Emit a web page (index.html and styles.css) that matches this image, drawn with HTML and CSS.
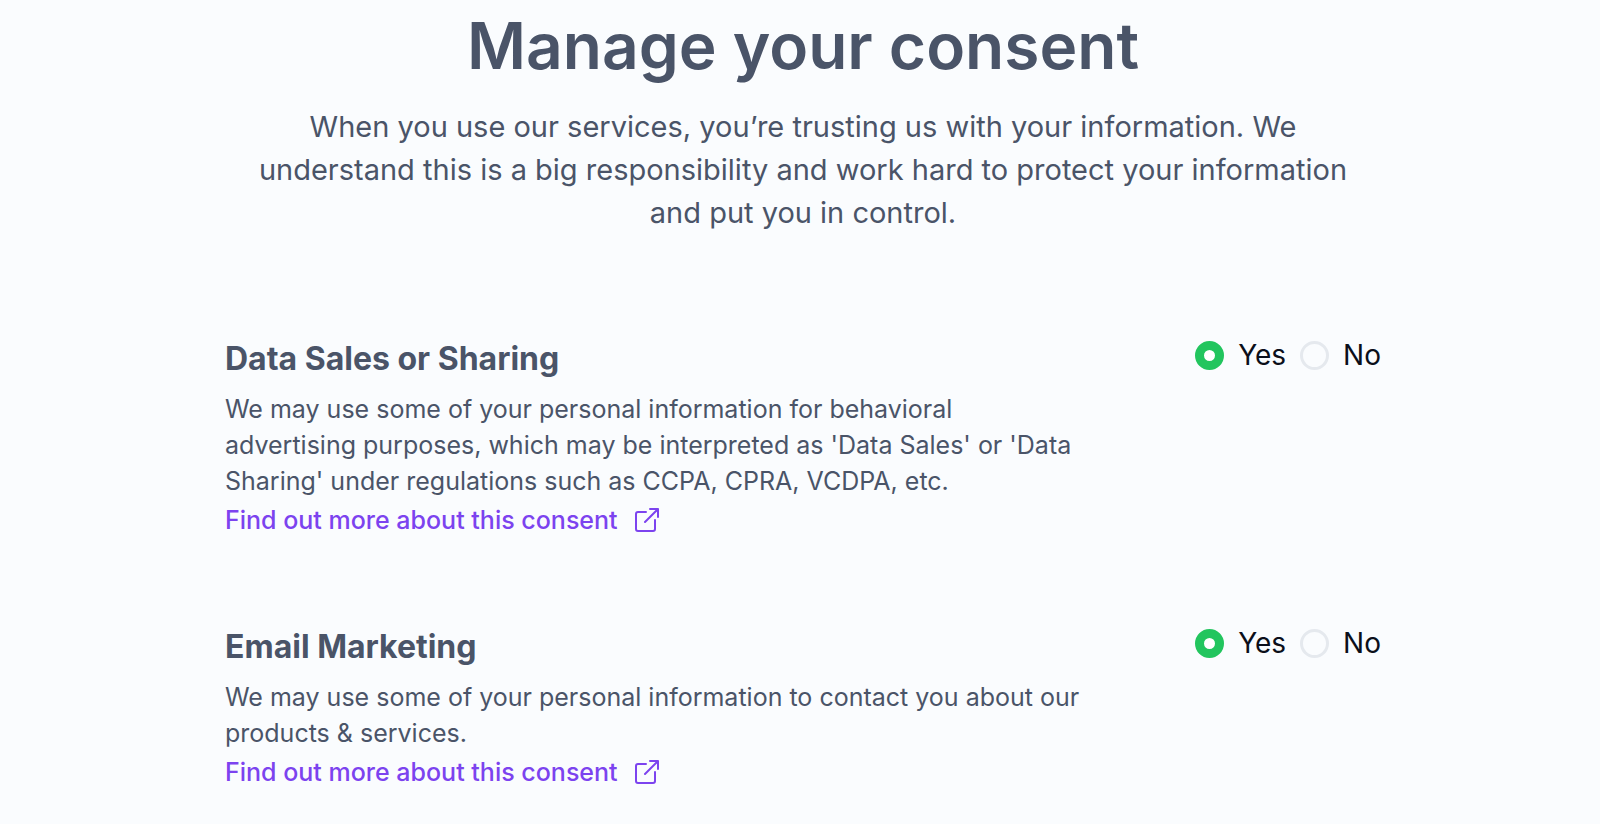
FILE: index.html
```html
<!DOCTYPE html>
<html lang="en">
<head>
    <meta charset="UTF-8">
    <meta name="viewport" content="width=device-width, initial-scale=1.0">
    <title>Manage your consent</title>
    <link rel="stylesheet" href="styles.css">
</head>
<body>
    <main class="page">
        <header class="intro">
            <h1>Manage your consent</h1>
            <p>When you use our services, you’re trusting us with your information. We understand this is a big responsibility and work hard to protect your information and put you in control.</p>
        </header>

        <form class="consents">
            <section class="consent">
                <div class="consent-text">
                    <h2 id="sales-title">Data Sales or Sharing</h2>
                    <p>We may use some of your personal information for behavioral advertising purposes, which may be interpreted as 'Data Sales' or 'Data Sharing' under regulations such as CCPA, CPRA, VCDPA, etc.</p>
                    <a class="more" href="#sales">Find out more about this consent
                        <svg class="more-icon" viewBox="0 0 26 26" aria-hidden="true">
                            <path d="M12 5H4a2 2 0 0 0-2 2v15a2 2 0 0 0 2 2h15a2 2 0 0 0 2-2v-9M16 2h8v8M11 15L24 2"/>
                        </svg>
                    </a>
                </div>
                <div class="choices" role="radiogroup" aria-labelledby="sales-title">
                    <label><input type="radio" name="sales" value="yes" checked>Yes</label>
                    <label><input type="radio" name="sales" value="no">No</label>
                </div>
            </section>

            <section class="consent">
                <div class="consent-text">
                    <h2 id="email-title">Email Marketing</h2>
                    <p>We may use some of your personal information to contact you about our products &amp; services.</p>
                    <a class="more" href="#email">Find out more about this consent
                        <svg class="more-icon" viewBox="0 0 26 26" aria-hidden="true">
                            <path d="M12 5H4a2 2 0 0 0-2 2v15a2 2 0 0 0 2 2h15a2 2 0 0 0 2-2v-9M16 2h8v8M11 15L24 2"/>
                        </svg>
                    </a>
                </div>
                <div class="choices" role="radiogroup" aria-labelledby="email-title">
                    <label><input type="radio" name="email" value="yes" checked>Yes</label>
                    <label><input type="radio" name="email" value="no">No</label>
                </div>
            </section>
        </form>
    </main>
</body>
</html>
```
FILE: styles.css
```css
* {
    box-sizing: border-box;
}

body {
    margin: 0;
    padding-left: 6px;
    background: #FAFCFE;
    color: #4A5468;
    font-family: Inter, sans-serif;
}

h1, h2, p {
    margin: 0;
}

.page {
    max-width: 1156px;
    margin: 0 auto;
    padding: 8px 0 32px;
}

.intro {
    padding: 0 16px;
    text-align: center;
}

.intro h1 {
    font-size: 64px;
    font-weight: 600;
    line-height: 76px;
}

.intro p {
    margin-top: 21px;
    font-size: 29px;
    font-weight: 400;
    line-height: 43px;
}

.consents {
    display: flex;
    flex-direction: column;
    gap: 82px;
    margin-top: 101px;
}

.consent {
    display: flex;
    justify-content: space-between;
    align-items: flex-start;
}

.consent-text {
    max-width: 860px;
}

.consent h2 {
    font-size: 32px;
    font-weight: 700;
    line-height: 48px;
}

.consent p {
    margin-top: 8px;
    font-size: 25px;
    font-weight: 400;
    line-height: 36px;
}

.more {
    display: flex;
    align-items: center;
    gap: 16px;
    width: fit-content;
    color: #7C43EF;
    font-size: 25px;
    font-weight: 500;
    line-height: 42px;
    text-decoration: none;
}

.more-icon {
    width: 26px;
    height: 26px;
    fill: none;
    stroke: currentColor;
    stroke-width: 2;
    stroke-linecap: round;
    stroke-linejoin: round;
}

.choices {
    display: flex;
    gap: 14px;
    color: #0B0F1A;
    font-size: 28px;
    line-height: 40px;
}

.choices label {
    display: flex;
    align-items: center;
    gap: 14px;
}

.choices input {
    appearance: none;
    width: 29px;
    height: 29px;
    margin: 0;
    border: 3px solid #E5E9EE;
    border-radius: 50%;
}

.choices input:checked {
    border: 9px solid #22C55E;
    background: #fff;
}
```
